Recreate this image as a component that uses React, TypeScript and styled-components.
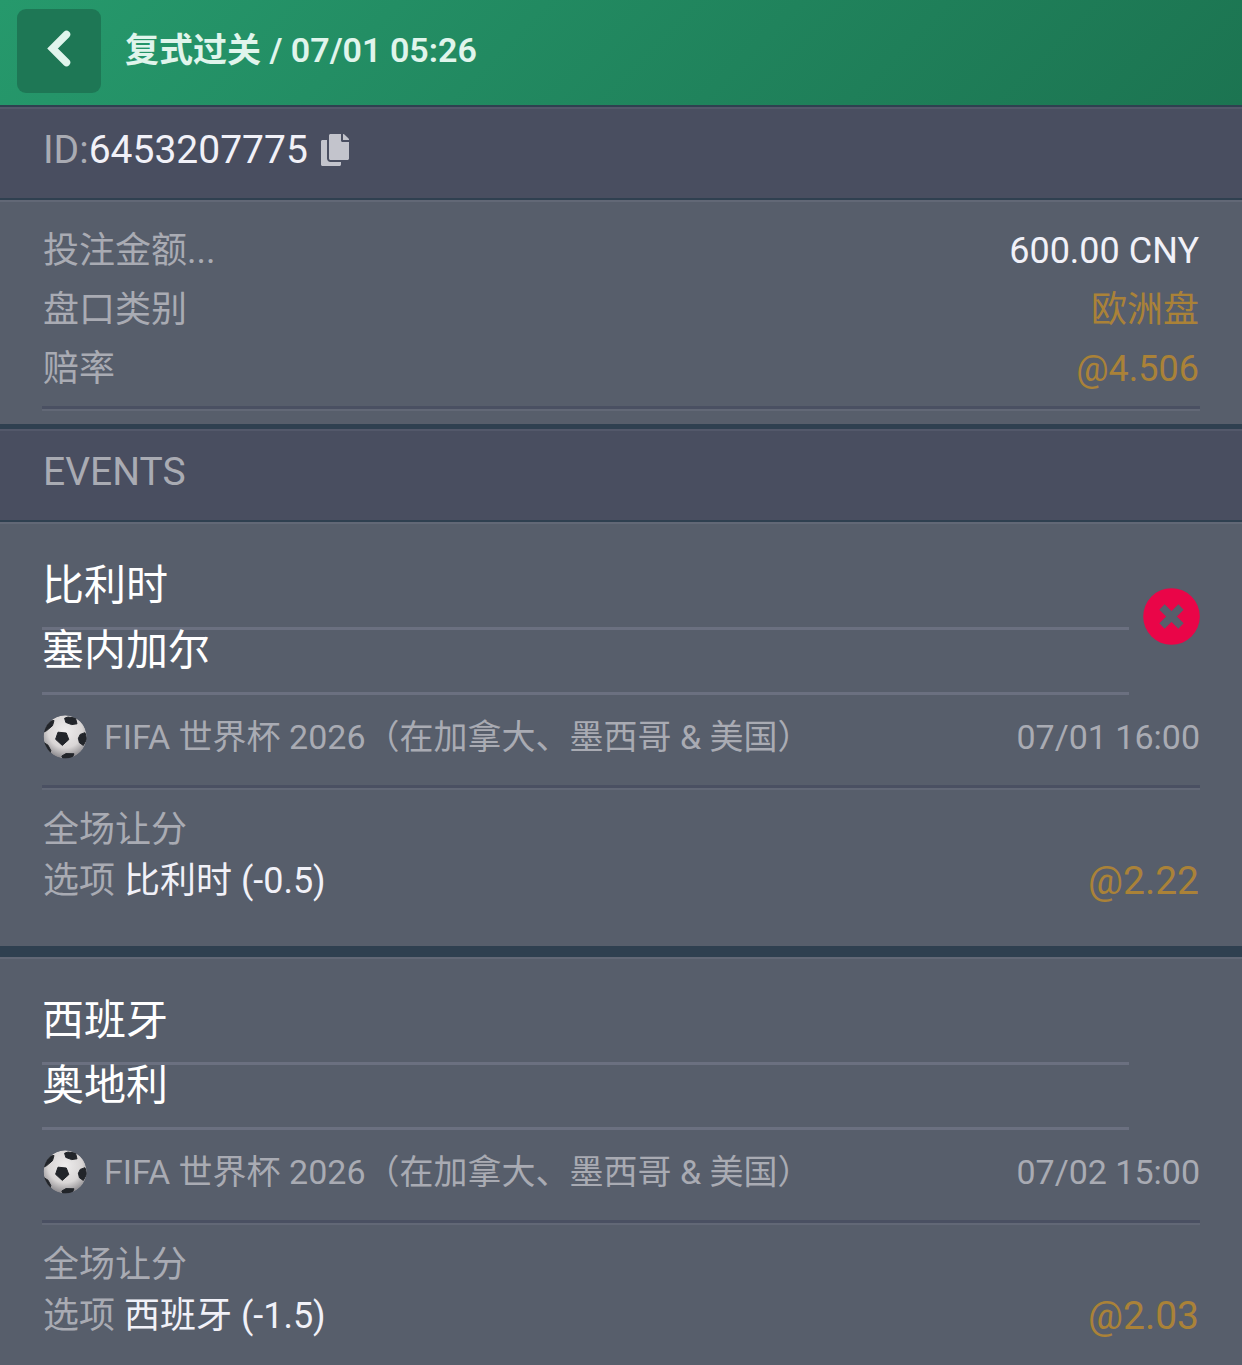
import React from "react";
import styled, { createGlobalStyle } from "styled-components";
import { FaCopy } from "react-icons/fa";

const color = {
  panel: "#575e6b",
  bar: "#494e60",
  edge: "#2f4050",
  panelLight: "#626876",
  barLight: "#53586a",
  rule: "#6b7080",
  muted: "#a9abb3",
  text: "#f1f1f8",
  gold: "#aa8238",
  lost: "#ea0548",
};

const GlobalStyle = createGlobalStyle`
  *, *::before, *::after { box-sizing: border-box; }
  body {
    margin: 0;
    background: ${color.panel};
    color: ${color.text};
    font-family: Roboto, "Noto Sans CJK SC", sans-serif;
    font-size: 36px;
  }
  h1, h2, h3, p, dl, dd, dt { margin: 0; font: inherit; }
  button { font: inherit; color: inherit; border: 0; padding: 0; background: none; cursor: pointer; }
  svg { display: block; }
`;

const Header = styled.header`
  display: flex;
  align-items: flex-start;
  gap: 24px;
  padding: 9px 17px 12px;
  background: linear-gradient(135deg, #26996c 0%, #1c7451 100%);
`;

const BackButton = styled.button`
  display: flex;
  justify-content: center;
  align-items: center;
  flex: none;
  width: 84px;
  height: 84px;
  border-radius: 9px;
  background: #1e7755;
  color: #e0f5ec;
`;

const Title = styled.h1`
  font-size: 34px;
  line-height: 82px;
  font-weight: 600;
  color: #e0f5ec;
`;

const Bar = styled.div<{ $edge: number }>`
  display: flex;
  align-items: center;
  gap: 11px;
  padding: 19px 43px 24px;
  border-top: ${(p) => p.$edge}px solid ${color.edge};
  border-bottom: 2px solid ${color.edge};
  background: ${color.bar};
  box-shadow: inset 0 2px ${color.barLight};
  font-size: 39px;
  line-height: 48px;
`;

const Heading = styled.h2`
  color: ${color.muted};
`;

const Muted = styled.span`
  color: ${color.muted};
`;

const CopyButton = styled.button`
  color: #c3c4cc;
`;

const Panel = styled.section`
  background: ${color.panel};
  box-shadow: inset 0 2px ${color.panelLight};
`;

const Details = styled(Panel)`
  padding: 22px 42px 13px;
`;

const DetailList = styled.dl`
  padding: 0 1px 7px;
`;

const DetailRow = styled.div`
  display: flex;
  justify-content: space-between;
  line-height: 59px;
`;

const Term = styled.dt`
  color: ${color.muted};
`;

const Value = styled.dd<{ $gold?: boolean }>`
  color: ${(p) => (p.$gold ? color.gold : color.text)};
`;

const Divider = styled.div`
  border-top: 3px solid #4a5062;
  border-bottom: 2px solid ${color.panelLight};
`;

const EventCard = styled(Panel).attrs({ as: "article" })`
  padding: 43px 42px 39px;

  & + & { border-top: 11px solid ${color.edge}; }
  &:last-child { padding-bottom: 20px; }
`;

const Matchup = styled.div`
  display: flex;
  gap: 14px;
`;

const Teams = styled.div`
  flex: 1;
`;

const Team = styled.h3`
  padding-bottom: 20px;
  border-bottom: 3px solid ${color.rule};
  color: #ffffff;
  font-size: 42px;
  line-height: 42px;
`;

const Status = styled.div`
  flex: none;
  width: 57px;
  padding-top: 23px;
`;

const League = styled.div`
  display: flex;
  align-items: center;
  padding: 20px 0 26px;
  color: ${color.muted};
  font-size: 34px;
  line-height: 44px;
`;

const LeagueName = styled.span`
  flex: 1;
  padding-left: 17px;
`;

const Market = styled.div`
  padding: 15px 1px 0;
  line-height: 51px;
`;

const Selection = styled.div`
  display: flex;
  justify-content: space-between;
`;

const Odds = styled.span`
  color: ${color.gold};
  font-size: 39px;
`;

const BackIcon = () => (
  <svg width="40" height="48" viewBox="0 0 40 48" fill="none" aria-hidden="true">
    <path d="M27.5 7.5 L13.5 21.5 L27.5 35.5" stroke="currentColor" strokeWidth="7.5" strokeLinecap="round" strokeLinejoin="miter" />
  </svg>
);

const LostIcon = () => (
  <svg width="57" height="57" viewBox="0 0 57 57" role="img" aria-label="Lost">
    <circle cx="28.5" cy="28.5" r="28.3" fill={color.lost} />
    <path d="M19 19 L38 38 M38 19 L19 38" stroke={color.panel} strokeWidth="7.5" />
  </svg>
);

const BallIcon = ({ id }: { id: string }) => (
  <svg width="45" height="44" viewBox="0 0 45 44" aria-hidden="true">
    <defs>
      <radialGradient id={`${id}-shade`} cx="0.5" cy="0.36" r="0.66">
        <stop offset="0" stopColor="#eeecec" />
        <stop offset="0.6" stopColor="#d9d6d6" />
        <stop offset="1" stopColor="#858387" />
      </radialGradient>
      <clipPath id={`${id}-edge`}>
        <circle cx="23.1" cy="21.8" r="21.5" />
      </clipPath>
    </defs>
    <g clipPath={`url(#${id}-edge)`}>
      <circle cx="23.1" cy="21.8" r="21.5" fill={`url(#${id}-shade)`} />
      <g fill="#22252a" stroke="#22252a" strokeWidth="1" strokeLinejoin="round">
        <path d="M16 17.2 L24.3 18 L26.8 24.6 L20.3 30.4 L13.6 24.3 Z" />
        <path d="M22.6 3.2 L26 2 L33.5 3 L35 8.8 L29.7 9.6 L23.8 7.4 Z" />
        <path d="M38.2 19.4 L43 17.7 L44.7 24 L41.3 30.4 L37.4 27.7 L36.4 23.3 Z" />
        <path d="M3 13 L5.3 9 L8.7 5.9 L12 5.5 L10.5 10.7 L4.7 15.6 L2 17 Z" />
        <path d="M1 27.5 L2.5 28 L6 30.2 L8.8 35.5 L8 38 L3 34 Z" />
        <path d="M19.8 41 L24 38.6 L32 38.8 L30.7 41.7 L26 44 L21 43.5 Z" />
      </g>
    </g>
  </svg>
);

interface Match {
  id: string;
  home: string;
  away: string;
  start: string;
  pick: string;
  odds: string;
  lost: boolean;
}

const matches: Match[] = [
  { id: "m1", home: "比利时", away: "塞内加尔", start: "07/01 16:00", pick: "比利时 (-0.5)", odds: "@2.22", lost: true },
  { id: "m2", home: "西班牙", away: "奥地利", start: "07/02 15:00", pick: "西班牙 (-1.5)", odds: "@2.03", lost: false },
];

const details = [
  { label: "投注金额...", value: "600.00 CNY", gold: false },
  { label: "盘口类别", value: "欧洲盘", gold: true },
  { label: "赔率", value: "@4.506", gold: true },
];

const MatchCard = ({ match }: { match: Match }) => (
  <EventCard>
    <Matchup>
      <Teams>
        <Team>{match.home}</Team>
        <Team>{match.away}</Team>
      </Teams>
      <Status>{match.lost && <LostIcon />}</Status>
    </Matchup>
    <League>
      <BallIcon id={match.id} />
      <LeagueName>FIFA 世界杯 2026（在加拿大、墨西哥 &amp; 美国）</LeagueName>
      <time>{match.start}</time>
    </League>
    <Divider />
    <Market>
      <p><Muted>全场让分</Muted></p>
      <Selection>
        <p><Muted>选项</Muted> {match.pick}</p>
        <Odds>{match.odds}</Odds>
      </Selection>
    </Market>
  </EventCard>
);

export default function App() {
  return (
    <>
      <GlobalStyle />
      <Header>
        <BackButton type="button" aria-label="Back"><BackIcon /></BackButton>
        <Title>复式过关 / 07/01 05:26</Title>
      </Header>
      <main>
        <Bar $edge={2}>
          <p><Muted>ID:</Muted>6453207775</p>
          <CopyButton type="button" aria-label="Copy ID"><FaCopy size={32} /></CopyButton>
        </Bar>
        <Details>
          <DetailList>
            {details.map((d) => (
              <DetailRow key={d.label}>
                <Term>{d.label}</Term>
                <Value $gold={d.gold}>{d.value}</Value>
              </DetailRow>
            ))}
          </DetailList>
          <Divider />
        </Details>
        <Bar $edge={5}>
          <Heading>EVENTS</Heading>
        </Bar>
        {matches.map((m) => (
          <MatchCard key={m.id} match={m} />
        ))}
      </main>
    </>
  );
}
